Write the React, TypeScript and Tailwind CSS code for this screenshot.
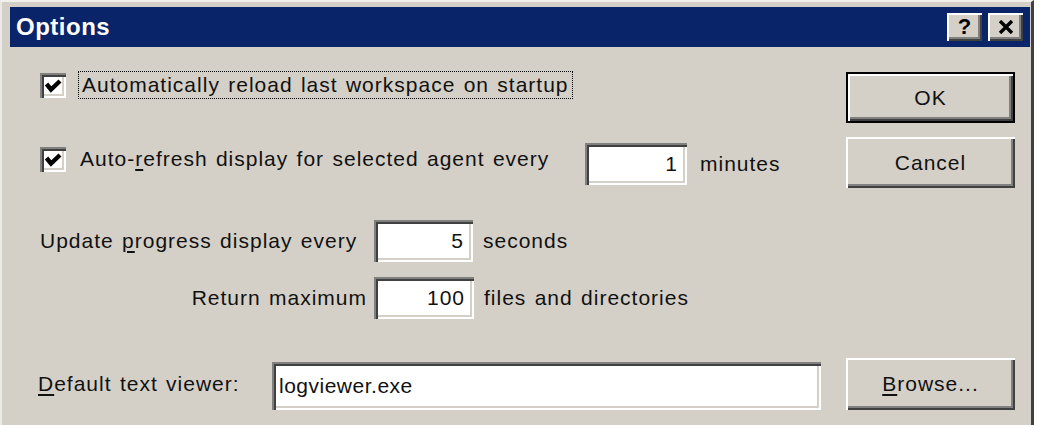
import React from 'react'

// classic 3D bevels, drawn at double size
const sunken =
  'bg-white shadow-[inset_2px_2px_0_#808080,inset_4px_4px_0_#404040,inset_-2px_-2px_0_#ffffff,inset_-4px_-4px_0_#d4d0c8]'
const raised =
  'bg-[#d4d0c8] shadow-[inset_2px_2px_0_#ffffff,inset_-2px_-2px_0_#404040,inset_-4px_-4px_0_#808080]'

const CheckBox = () => (
  <span className={`w-[26px] h-[25px] shrink-0 flex items-center justify-center ${sunken}`}>
    <svg width="26" height="25" viewBox="0 0 26 25">
      <path d="M6.5 11 L11 16.5 L20 8" fill="none" stroke="#000" strokeWidth="4.4" />
    </svg>
  </span>
)

const Field = ({ value, className }: { value: string; className: string }) => (
  <div className={`h-[42px] flex items-center justify-end pr-[9px] ${sunken} ${className}`}>
    <span>{value}</span>
  </div>
)

const Button = ({ children, isDefault }: { children: React.ReactNode; isDefault?: boolean }) => (
  <button
    className={`w-[169px] h-[51px] flex items-center justify-center ${
      isDefault ? 'border-2 border-black' : ''
    } ${raised}`}
  >
    {children}
  </button>
)

const Mn = ({ children }: { children: React.ReactNode }) => (
  <span className="underline decoration-2 underline-offset-[3px]">{children}</span>
)

export default function App() {
  return (
    <div className="w-[1056px] h-[425px] bg-white overflow-hidden font-['Liberation_Sans',Arial,sans-serif] text-[21px] leading-[24px] tracking-[1px] [word-spacing:1.5px] text-[#111]">
      <div className="w-[1034px] h-[425px] flex flex-col bg-[#d4d0c8] border-t-2 border-l-2 border-r-[3px] border-t-[#f2f0ec] border-l-[#eceae4] border-r-[#404040] pt-[5px] pl-[8px] pr-[1px]">
        {/* title bar */}
        <div className="h-[40px] shrink-0 bg-[#0a246a] flex items-center pl-[6px] pr-[7px]">
          <span className="flex-1 text-white font-bold text-[24px] tracking-[0.5px]">Options</span>
          <div className="flex gap-[6px]">
            <div className={`w-[35px] h-[28px] flex items-center justify-center ${raised}`}>
              <span className="font-bold text-[22px] text-black tracking-normal">?</span>
            </div>
            <div className={`w-[35px] h-[28px] flex items-center justify-center ${raised}`}>
              <svg width="16" height="14" viewBox="0 0 16 14">
                <path d="M2 1 L14 13 M14 1 L2 13" stroke="#000" strokeWidth="3.4" />
              </svg>
            </div>
          </div>
        </div>

        {/* dialog body */}
        <div className="flex-1 flex flex-col pl-[28px] pr-[15px]">
          <div className="flex items-start">
            <div className="flex-1 flex flex-col pl-[2px]">
              <div className="mt-[23px] h-[30px] flex items-center">
                <CheckBox />
                <span className="ml-[12px] border border-dotted border-black px-[3px] leading-[26px]">
                  Automatically reload last workspace on startup
                </span>
              </div>

              <div className="mt-[42px] h-[44px] flex items-start">
                <div className="w-[545px] h-[34px] flex items-center">
                  <CheckBox />
                  <span className="ml-[14px]">
                    Auto-<Mn>r</Mn>efresh display for selected agent every
                  </span>
                </div>
                <Field value="1" className="w-[102px] mt-[1px]" />
                <span className="ml-[13px] self-center">minutes</span>
              </div>

              <div className="mt-[34px] h-[42px] flex items-center">
                <span className="w-[334px]">
                  Update <Mn>p</Mn>rogress display every
                </span>
                <Field value="5" className="w-[99px]" />
                <span className="ml-[10px]">seconds</span>
              </div>

              <div className="mt-[15px] h-[42px] flex items-center">
                <span className="w-[334px] text-right pr-[7px]">Return maximum</span>
                <Field value="100" className="w-[100px]" />
                <span className="ml-[10px]">files and directories</span>
              </div>
            </div>

            <div className="w-[169px] flex flex-col">
              <div className="mt-[25px]">
                <Button isDefault>OK</Button>
              </div>
              <div className="mt-[14px]">
                <Button>Cancel</Button>
              </div>
            </div>
          </div>

          <div className="mt-[39px] h-[52px] flex items-center">
            <span className="w-[234px]">
              <Mn>D</Mn>efault text viewer:
            </span>
            <div className={`flex-1 h-[48px] mt-[4px] flex items-center pl-[7px] ${sunken}`}>
              <span className="tracking-[0.5px]">logviewer.exe</span>
            </div>
            <div className="ml-[25px]">
              <button className={`w-[169px] h-[52px] flex items-center justify-center ${raised}`}>
                <span>
                  <Mn>B</Mn>rowse...
                </span>
              </button>
            </div>
          </div>
        </div>
      </div>
    </div>
  )
}
